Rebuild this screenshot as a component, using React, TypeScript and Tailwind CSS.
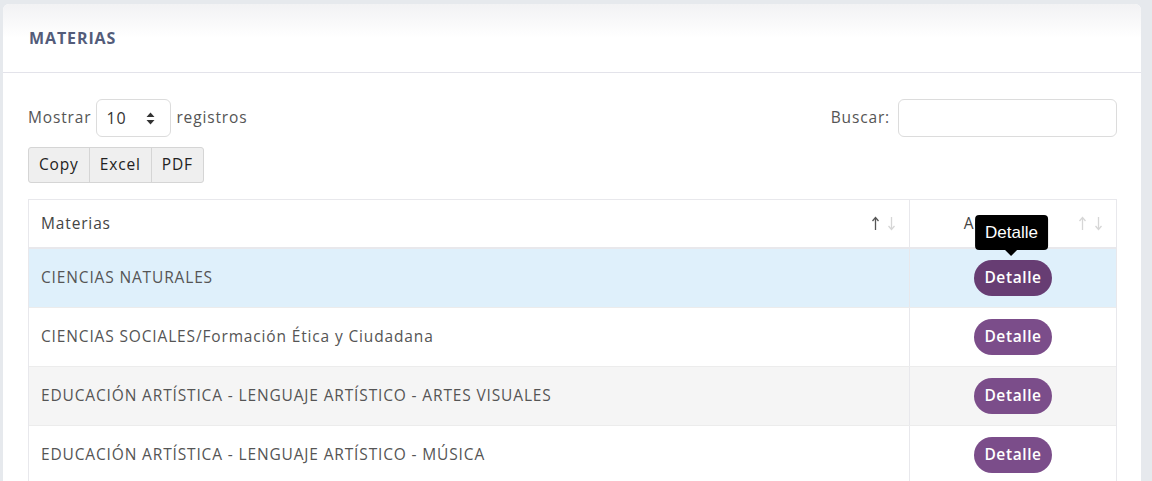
const rows = [
  'CIENCIAS NATURALES',
  'CIENCIAS SOCIALES/Formación Ética y Ciudadana',
  'EDUCACIÓN ARTÍSTICA - LENGUAJE ARTÍSTICO - ARTES VISUALES',
  'EDUCACIÓN ARTÍSTICA - LENGUAJE ARTÍSTICO - MÚSICA',
];

function Arrow({ up, color }: { up?: boolean; color: string }) {
  return (
    <svg width="9" height="15" viewBox="0 0 9 15" className={up ? '' : 'rotate-180'}>
      <path d="M4.5 2 V14" stroke={color} strokeWidth="1.3" fill="none" />
      <path d="M1.5 5 L4.5 1.5 L7.5 5" stroke={color} strokeWidth="1.3" fill="none" />
    </svg>
  );
}

function SortArrows({ faded }: { faded?: boolean }) {
  return (
    <span className="flex items-center gap-[7px]">
      <Arrow up color={faded ? '#d6d6d6' : '#555'} />
      <Arrow color="#d6d6d6" />
    </span>
  );
}

export default function App() {
  return (
    <div
      className="h-[481px] overflow-hidden bg-[#e6e9ed] pt-[4px] pl-[3px] pr-[11px] text-[15.5px] tracking-[0.85px]"
      style={{ fontFamily: '"Open Sans", "Noto Sans", sans-serif' }}
    >
      <div className="h-full rounded-t-[6px] bg-white">
        {/* card header */}
        <div className="flex h-[69px] items-center rounded-t-[6px] border-b border-[#e3e3ea] bg-gradient-to-b from-[#f2f2f4] to-white to-50% px-[26px]">
          <h1 className="text-[16px] font-bold tracking-[0.9px] text-[#535c7a]">MATERIAS</h1>
        </div>

        <div className="pl-[25px] pr-[24px] pt-[26px]">
          {/* controls */}
          <div className="flex items-center justify-between">
            <div className="flex items-center gap-[5px] text-[#555]">
              <span>Mostrar</span>
              <div className="flex h-[38px] w-[75px] items-center justify-between rounded-[6px] border border-[#dcdcdc] pl-[9px] pr-[15px] text-[16px] text-[#333]">
                <span>10</span>
                <svg width="9" height="13" viewBox="0 0 9 13">
                  <path d="M4.5 0.5 L8.5 5 H0.5 Z M4.5 12.5 L8.5 8 H0.5 Z" fill="#333" />
                </svg>
              </div>
              <span>registros</span>
            </div>
            <div className="flex items-center gap-[8px] text-[#555]">
              <span>Buscar:</span>
              <div className="h-[38px] w-[219px] rounded-[6px] border border-[#dcdcdc]" />
            </div>
          </div>

          <div className="mt-[10px] flex h-[36px] w-fit overflow-hidden rounded-[3px] border border-[#d5d5d5] bg-[#efefef] font-medium text-[#222]">
            <span className="flex items-center px-[10px]">Copy</span>
            <span className="flex items-center border-l border-[#d5d5d5] px-[10px]">Excel</span>
            <span className="flex items-center border-l border-[#d5d5d5] px-[10px]">PDF</span>
          </div>

          {/* table */}
          <div className="mt-[16px] border border-[#e8e8ec] text-[#555]">
            <div className="grid h-[49px] grid-cols-[880px_1fr] border-b-2 border-[#e8e8ec] font-medium text-[#444]">
              <div className="flex items-center justify-between pl-[12px] pr-[13px]">
                <span>Materias</span>
                <SortArrows />
              </div>
              <div className="flex items-center border-l border-[#e8e8ec] pl-[10px] pr-[13px]">
                <span className="flex-1 text-center">Acciones</span>
                <SortArrows faded />
              </div>
            </div>

            {rows.map((name, i) => (
              <div
                key={name}
                className={`grid h-[59px] grid-cols-[880px_1fr] border-b border-[#ececec] ${
                  i === 0 ? 'bg-[#dff0fb]' : i === 2 ? 'bg-[#f5f5f5]' : 'bg-white'
                }`}
              >
                <div className="flex items-center pl-[12px]">{name}</div>
                <div className="relative flex items-center justify-center border-l border-[#e8e8ec]">
                  <button
                    className={`h-[36px] w-[78px] rounded-full font-semibold tracking-[0.6px] text-white ${
                      i === 0 ? 'bg-[#673d73]' : 'bg-[#7b4d8a]'
                    }`}
                  >
                    Detalle
                  </button>
                  {i === 0 && (
                    <div className="absolute left-1/2 top-[-34px] -translate-x-[52%]">
                      <div
                        className="rounded-[4px] bg-black px-[10px] py-[7px] text-[17px] leading-[21px] tracking-normal text-white"
                        style={{ fontFamily: '"Liberation Sans", Arial, sans-serif' }}
                      >
                        Detalle
                      </div>
                      <div className="mx-auto h-0 w-0 border-x-[6px] border-t-[6px] border-x-transparent border-t-black" />
                    </div>
                  )}
                </div>
              </div>
            ))}
          </div>
        </div>
      </div>
    </div>
  );
}
